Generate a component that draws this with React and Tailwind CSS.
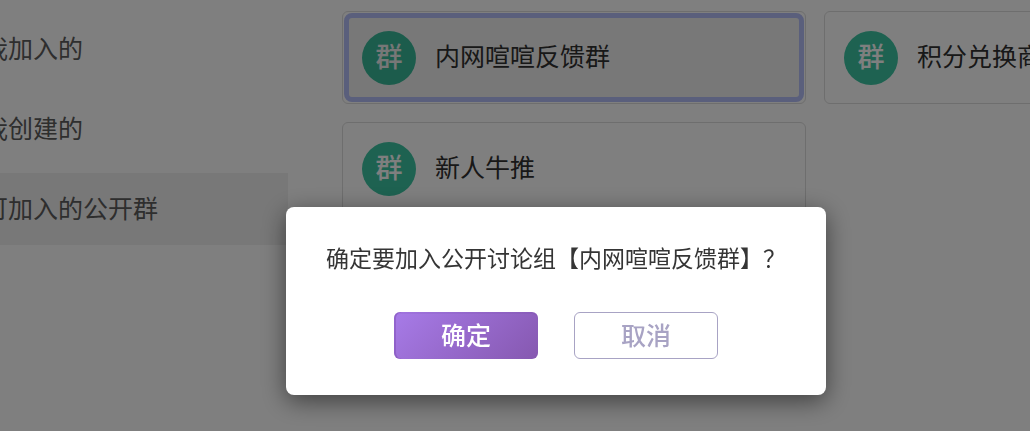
const navItems = [
  { label: '我加入的', active: false },
  { label: '我创建的', active: false },
  { label: '可加入的公开群', active: true },
];

const groups = [
  { name: '内网喧喧反馈群', selected: true },
  { name: '积分兑换商城', selected: false },
  { name: '新人牛推', selected: false },
];

function NavItem({ label, active }) {
  return (
    <a
      href="#"
      aria-current={active ? 'page' : undefined}
      className={`flex h-18 items-center pb-0.5 text-[25px] whitespace-nowrap text-[#5c5c5c] ${active ? 'bg-[#f1f1f1]' : ''}`}
    >
      <span className="-ml-[17px]">{label}</span>
    </a>
  );
}

function GroupCard({ name, selected }) {
  return (
    <button type="button" className="h-[93px] rounded-md border border-[#dcdcdc] p-px text-left">
      <span
        className={`flex h-full items-center gap-[19px] rounded-lg border-[5px] px-[13px] ${
          selected ? 'border-[#b5bef8] bg-[#f1f1f1]' : 'border-transparent'
        }`}
      >
        <span
          className={`flex size-[54px] shrink-0 items-center justify-center rounded-full pb-0.5 text-[27px] font-medium ${
            selected ? 'bg-[#38b898] text-[#eeeeee]' : 'bg-[#3cc4a2] text-white'
          }`}
        >
          群
        </span>
        <span className="pb-[3px] text-[25px] whitespace-nowrap text-[#303030]">{name}</span>
      </span>
    </button>
  );
}

function ConfirmDialog() {
  return (
    <div className="fixed inset-0 flex items-start justify-center bg-black/50 pt-[207px] pl-[82px]">
      <div
        role="dialog"
        aria-modal="true"
        aria-labelledby="confirm-message"
        className="w-[540px] rounded-lg bg-white p-9 shadow-[0_6px_24px_rgba(0,0,0,0.5)]"
      >
        <p id="confirm-message" className="text-center text-[23px] leading-[29px] whitespace-nowrap text-[#353535]">
          确定要加入公开讨论组【内网喧喧反馈群】？
        </p>
        <div className="mt-10 flex justify-center gap-9">
          <button
            type="button"
            className="h-[47px] w-36 rounded-md bg-linear-135 from-[#a77be8] to-[#8658b0] pb-1 text-[25px] leading-8 font-medium text-white shadow-[inset_2px_0_0_rgba(90,40,140,0.25),inset_0_2px_0_rgba(90,40,140,0.08)]"
          >
            确定
          </button>
          <button
            type="button"
            className="h-[47px] w-36 rounded-md border border-[#a8a3c4] pb-1 text-[25px] leading-8 font-medium text-[#a8a3c4]"
          >
            取消
          </button>
        </div>
      </div>
    </div>
  );
}

export default function App() {
  return (
    <div className="min-h-screen overflow-hidden bg-white font-['Noto_Sans_CJK_SC',sans-serif]">
      <div className="flex gap-[54px]">
        <nav className="flex w-72 shrink-0 flex-col gap-2 overflow-hidden pt-[13px]">
          {navItems.map((item) => (
            <NavItem key={item.label} {...item} />
          ))}
        </nav>
        <main className="grid shrink-0 grid-cols-[464px_464px] content-start gap-[18px] pt-[11px]">
          {groups.map((group) => (
            <GroupCard key={group.name} {...group} />
          ))}
        </main>
      </div>
      <ConfirmDialog />
    </div>
  );
}
